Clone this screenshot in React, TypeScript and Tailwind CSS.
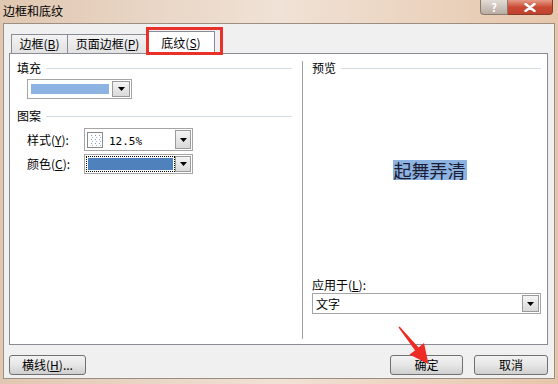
import React from 'react';

function U({ c }: { c: string }) {
    return <span className="underline underline-offset-1">{c}</span>;
}

function DropButton({ className = '' }: { className?: string }) {
    return (
        <div className={`flex items-center justify-center bg-gradient-to-b from-[#f4f4f4] to-[#d9d9d9] border border-[#9a9a9a] ${className}`}>
            <svg width="7" height="4" viewBox="0 0 7 4">
                <path d="M0 0h7L3.5 4z" fill="#000" />
            </svg>
        </div>
    );
}

function SectionHeader({ title, right }: { title: string; right: string }) {
    return (
        <div className="flex items-center h-[14px]">
            <span className="leading-[14px]">{title}</span>
            <div className={`flex-1 h-px bg-[#d5dde3] ml-[5px] ${right}`} />
        </div>
    );
}

function PatternSwatch() {
    return (
        <svg width="16" height="16" viewBox="0 0 16 16" className="shrink-0">
            <rect x="0.5" y="0.5" width="15" height="15" fill="#fff" stroke="#8a8a8a" />
            {[3, 7, 11].map(y =>
                [3, 7, 11].map(x => <rect key={`${x}-${y}`} x={x + (y % 2)} y={y} width="1" height="1" fill="#7a9cc0" />)
            )}
            {[5, 9, 13].map(y =>
                [5, 9, 13].map(x => <rect key={`b${x}-${y}`} x={x} y={y} width="1" height="1" fill="#9fb6cf" />)
            )}
        </svg>
    );
}

function WinButton({ children, className = '' }: { children: React.ReactNode; className?: string }) {
    return (
        <div className={`h-[20px] flex items-center justify-center rounded-[3px] border border-[#707070] bg-gradient-to-b from-[#f2f2f2] via-[#e6e6e6] to-[#cfcfcf] text-[12px] leading-none ${className}`}>
            {children}
        </div>
    );
}

export default function App() {
    return (
        <div className="relative w-[558px] h-[384px] overflow-hidden flex flex-col bg-gradient-to-r from-[#e0c7b1] via-[#f0e2d6] to-[#e6c6aa] font-['Noto_Sans_CJK_SC',sans-serif] text-[12px] text-black">
            {/* title bar */}
            <div className="h-[23px] flex items-start shrink-0">
                <span className="pl-[3px] pt-[4px] text-[12px] leading-[14px] text-black">边框和底纹</span>
                <div className="ml-auto mr-[5px] flex">
                    <div className="w-[28px] h-[15px] rounded-bl-[4px] border border-t-0 border-[#8a7a6c] bg-gradient-to-b from-[#e2dbd5] to-[#b9aca2] flex items-center justify-center text-white text-[11px] font-bold leading-none">?</div>
                    <div className="w-[45px] h-[15px] rounded-br-[4px] border border-t-0 border-l-0 border-[#8a3a2c] bg-gradient-to-b from-[#e59b88] via-[#c94b35] to-[#c0412c] flex items-center justify-center">
                        <svg width="12" height="9" viewBox="0 0 12 9">
                            <path d="M1.5 1l9 7M10.5 1l-9 7" stroke="#fff" strokeWidth="2.4" strokeLinecap="round" />
                        </svg>
                    </div>
                </div>
            </div>

            {/* client area */}
            <div className="flex-1 mx-[3px] mb-[5px] border border-[#9c8e80] bg-[#f0f0f0] flex flex-col pt-[6px] pl-[5px] pr-[6px]">
                {/* tabs */}
                <div className="flex items-end h-[23px] pl-[2px] relative z-10">
                    <div className="h-[19px] w-[57px] flex items-center justify-center border border-b-0 border-[#898c95] bg-gradient-to-b from-[#f3f3f3] to-[#e2e2e2] leading-none">
                        边框(<U c="B" />)
                    </div>
                    <div className="h-[19px] w-[80px] flex items-center justify-center border border-b-0 border-l-0 border-[#898c95] bg-gradient-to-b from-[#f3f3f3] to-[#e2e2e2] leading-none">
                        页面边框(<U c="P" />)
                    </div>
                    <div className="h-[23px] w-[67px] -mb-px flex items-center justify-center border border-b-0 border-l-0 border-[#898c95] bg-white leading-none">
                        底纹(<U c="S" />)
                    </div>
                </div>

                {/* panel */}
                <div className="h-[292px] border border-[#898c95] bg-white flex">
                    {/* left column */}
                    <div className="w-[292px] flex flex-col pt-[7px] pl-[7px]">
                        <SectionHeader title="填充" right="mr-[10px]" />
                        <div className="mt-[4px] ml-[10px] w-[105px] h-[20px] border border-[#a5a5a5] bg-white flex items-center pl-[3px] pr-px gap-[3px]">
                            <div className="w-[80px] h-[10px] bg-[#8db3e2]" />
                            <DropButton className="w-[18px] h-[16px] ml-auto" />
                        </div>

                        <div className="mt-[10px]">
                            <SectionHeader title="图案" right="mr-[10px]" />
                        </div>

                        <div className="mt-[5px] ml-[10px] flex items-center">
                            <span className="w-[57px] leading-none">样式(<U c="Y" />):</span>
                            <div className="w-[109px] h-[23px] border border-[#a5a5a5] bg-white flex items-center pl-[2px] pr-px">
                                <PatternSwatch />
                                <span className="ml-[6px] font-['DejaVu_Sans_Mono',monospace] text-[11px] leading-none mt-[4px]">12.5%</span>
                                <DropButton className="w-[16px] h-[19px] ml-auto" />
                            </div>
                        </div>

                        <div className="mt-[3px] ml-[10px] flex items-center">
                            <span className="w-[57px] leading-none">颜色(<U c="C" />):</span>
                            <div className="w-[109px] h-[20px] border border-[#a5a5a5] bg-white flex items-center pl-[1px] pr-px">
                                <div className="w-[90px] h-[16px] border border-dotted border-black p-px">
                                    <div className="w-full h-full bg-[#4f81bd]" />
                                </div>
                                <DropButton className="w-[16px] h-[16px] ml-auto" />
                            </div>
                        </div>
                    </div>

                    {/* divider */}
                    <div className="w-px bg-[#a0a0a0] mt-[7px] mb-[5px]" />

                    {/* right column */}
                    <div className="flex-1 flex flex-col pt-[7px] pl-[9px] pb-[30px]">
                        <SectionHeader title="预览" right="mr-[6px]" />
                        <div className="flex-1 flex items-center justify-center pb-[14px]">
                            <span className="bg-[#8db3e2] text-[#1b1b33] text-[18px] leading-[20px] px-px">起舞弄清</span>
                        </div>
                        <span className="leading-[14px]">应用于(<U c="L" />):</span>
                        <div className="mt-px mr-[6px] h-[21px] border border-[#a5a5a5] bg-white flex items-center pl-[3px] pr-px">
                            <span className="leading-none">文字</span>
                            <DropButton className="w-[17px] h-[17px] ml-auto" />
                        </div>
                    </div>
                </div>

                {/* bottom buttons */}
                <div className="mt-[10px] flex items-center">
                    <WinButton className="w-[77px]">横线(<U c="H" />)...</WinButton>
                    <WinButton className="w-[73px] ml-auto">确定</WinButton>
                    <WinButton className="w-[74px] ml-[11px]">取消</WinButton>
                </div>
            </div>

            {/* annotations */}
            <div className="absolute left-[146px] top-[27px] w-[77px] h-[28px] border-[3px] border-[#e8312b] z-20 pointer-events-none" />
            <svg className="absolute left-0 top-0 z-20 pointer-events-none" width="558" height="384" viewBox="0 0 558 384">
                <polygon points="398.5,327.4 399.6,326.4 418.6,347.4 424,343 428.5,364 409.5,354.5 415.1,350.6" fill="#ee2b24" />
            </svg>
        </div>
    );
}
